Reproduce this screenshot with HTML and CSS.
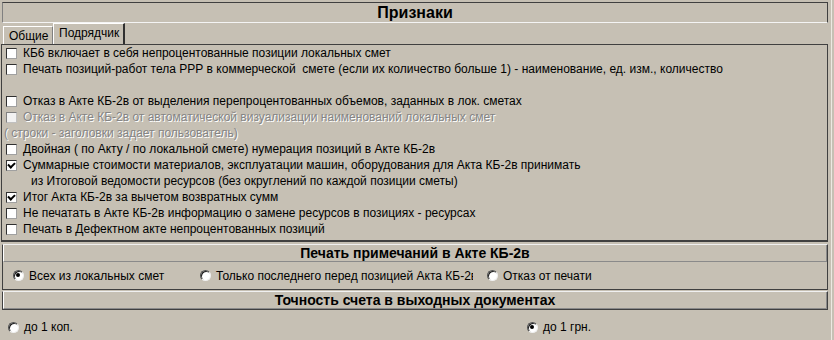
FILE: index.html
```html
<!DOCTYPE html>
<html lang="ru">
<head>
  <meta charset="UTF-8" />
  <title>Признаки</title>
  <link rel="stylesheet" href="styles.css">
</head>
<body>
<div class="window">

  <div class="caption">Признаки</div>

  <div class="tabs">
    <div class="tab">Общие</div>
    <div class="tab selected">Подрядчик</div>
  </div>

  <div class="tab-panel">
    <div class="row"><span class="check"></span>КБ6 включает в себя непроцентованные позиции локальных смет</div>
    <div class="row"><span class="check"></span>Печать позиций-работ тела РРР в коммерческой&nbsp; смете (если их количество больше 1) - наименование, ед. изм., количество</div>
    <div class="row"></div>
    <div class="row"><span class="check"></span>Отказ в Акте КБ-2в от выделения перепроцентованных объемов, заданных в лок. сметах</div>
    <div class="row disabled"><span class="check"></span>Отказ в Акте КБ-2в от автоматической визуализации наименований локальных смет</div>
    <div class="row disabled note">( строки - заголовки задает пользователь)</div>
    <div class="row"><span class="check"></span>Двойная ( по Акту / по локальной смете) нумерация позиций в Акте КБ-2в</div>
    <div class="row"><span class="check checked"></span>Суммарные стоимости материалов, эксплуатации машин, оборудования для Акта КБ-2в принимать</div>
    <div class="row indent">из Итоговой ведомости ресурсов (без округлений по каждой позиции сметы)</div>
    <div class="row"><span class="check checked"></span>Итог Акта КБ-2в за вычетом возвратных сумм</div>
    <div class="row"><span class="check"></span>Не печатать в Акте КБ-2в информацию о замене ресурсов в позициях - ресурсах</div>
    <div class="row"><span class="check"></span>Печать в Дефектном акте непроцентованных позиций</div>
  </div>

  <div class="group">
    <div class="group-title">Печать примечаний в Акте КБ-2в</div>
    <div class="radios notes">
      <div class="radio-item w1"><span class="radio on"></span>Всех из локальных смет</div>
      <div class="radio-item w2"><span class="radio"></span>Только последнего перед позицией Акта КБ-2в</div>
      <div class="radio-item"><span class="radio"></span>Отказ от печати</div>
    </div>
  </div>

  <div class="group">
    <div class="group-title">Точность счета в выходных документах</div>
  </div>
  <div class="radios accuracy">
    <div class="radio-item w3"><span class="radio"></span>до 1 коп.</div>
    <div class="radio-item"><span class="radio on"></span>до 1 грн.</div>
  </div>

</div>
</body>
</html>
```

FILE: styles.css
```css
body {
  margin: 0;
  background: #c6c0b4;
  font-family: "Liberation Sans", Arial, sans-serif;
  font-size: 12px;
  color: #000;
}

.window {
  width: 831px;
  height: 340px;
  border-right: 1px solid #ece9e2;
  overflow: hidden;
}

.caption {
  margin: 2px 3px 0 2px;
  height: 19px;
  line-height: 19px;
  border: 1px solid #404040;
  border-bottom-color: #f4f4f4;
  border-left-color: #808080;
  text-align: center;
  font-size: 16px;
  font-weight: bold;
}

.tabs {
  display: flex;
  align-items: flex-end;
  height: 21px;
  padding-left: 3px;
}

.tab {
  height: 17px;
  line-height: 18px;
  padding: 0 5px;
  border-top: 1px solid #fff;
  border-left: 1px solid #fff;
  border-right: 1px solid #808080;
  width: 38px;
}

.tab.selected {
  height: 20px;
  line-height: 19px;
  width: 59px;
  border-right: 2px solid #303030;
}

.tab-panel {
  margin: 0 3px 0 1px;
  height: 195px;
  border: 1px solid #404040;
  border-width: 1px 1px 2px 1px;
}

.row {
  display: flex;
  align-items: center;
  height: 16px;
  padding-left: 4px;
  white-space: nowrap;
}

.row.note {
  padding-left: 2px;
}

.row.indent {
  padding-left: 29px;
}

.row.disabled {
  color: #858585;
  text-shadow: 1px 1px 0 #fff;
}

.check {
  position: relative;
  flex: none;
  width: 9px;
  height: 9px;
  margin-right: 6px;
  background: #fff;
  border: 1px solid;
  border-color: #303030 #a0a0a0 #a0a0a0 #303030;
}

.row.disabled .check {
  border-color: #808080 #c0c0c0 #c0c0c0 #808080;
  background: #f2f2f2;
}

.check.checked::after {
  content: "";
  position: absolute;
  left: 1px;
  top: 0px;
  width: 5px;
  height: 3px;
  border-left: 2px solid #000;
  border-bottom: 2px solid #000;
  transform: translate(0, 1px) rotate(-45deg);
}

.group {
  margin: 2px 3px 0 2px;
  border: 1px solid #404040;
  border-top-color: #f0f0f0;
}

.group + .group {
  margin-top: 1px;
}

.group-title {
  height: 16px;
  line-height: 16px;
  border: 1px solid;
  border-color: #fff #8a8a8a #8a8a8a #fff;
  border-top: none;
  text-align: center;
  font-size: 14px;
  font-weight: bold;
}

.radios {
  display: flex;
  align-items: center;
  white-space: nowrap;
}

.radios.notes {
  height: 27px;
  padding-left: 10px;
}

.radios.accuracy {
  height: 32px;
  padding-top: 1px;
  padding-left: 8px;
}

.radio-item {
  display: flex;
  align-items: center;
  overflow: hidden;
}

.radio-item.w1 { width: 187px; }
.radio-item.w2 { width: 273px; margin-right: 14px; }
.radio-item.w3 { width: 519px; }

.radio {
  position: relative;
  flex: none;
  box-sizing: border-box;
  width: 11px;
  height: 11px;
  margin-right: 5px;
  border-radius: 50%;
  background: #fff;
  border: 1px solid;
  border-color: #505050 #f0f0f0 #f0f0f0 #505050;
  box-shadow: inset 1px 1px 0 #202020;
}

.radio.on::after {
  content: "";
  position: absolute;
  left: 2px;
  top: 2px;
  width: 4px;
  height: 4px;
  border-radius: 50%;
  background: #000;
}
```
